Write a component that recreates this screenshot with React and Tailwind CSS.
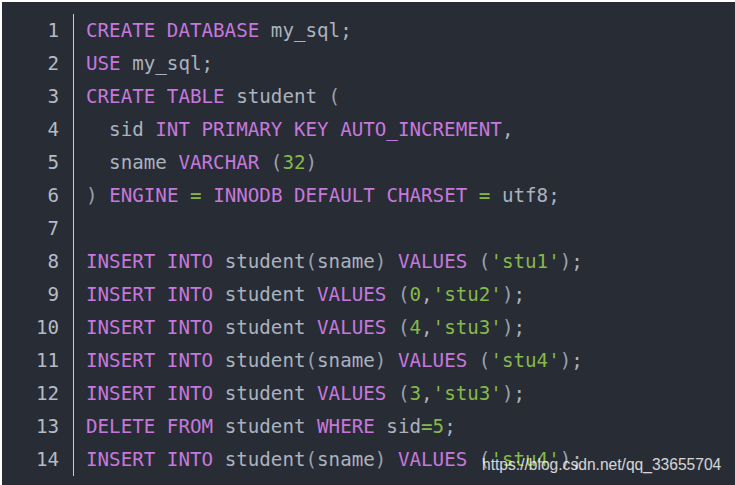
import React from "react";

const K = ({ children }) => <span className="text-[#c678dd]">{children}</span>;
const G = ({ children }) => <span className="text-[#86b94a]">{children}</span>;
const P = ({ children }) => <span className="text-[#9aa1ad]">{children}</span>;

const lines = [
  <><K>CREATE DATABASE</K> my_sql;</>,
  <><K>USE</K> my_sql;</>,
  <><K>CREATE TABLE</K> student <P>(</P></>,
  <>  sid <K>INT PRIMARY KEY AUTO_INCREMENT</K>,</>,
  <>  sname <K>VARCHAR</K> <P>(</P><G>32</G><P>)</P></>,
  <><P>)</P> <K>ENGINE</K> <G>=</G> <K>INNODB DEFAULT CHARSET</K> <G>=</G> utf8;</>,
  <>{" "}</>,
  <><K>INSERT INTO</K> student<P>(</P>sname<P>)</P> <K>VALUES</K> <P>(</P><G>'stu1'</G><P>)</P>;</>,
  <><K>INSERT INTO</K> student <K>VALUES</K> <P>(</P><G>0</G>,<G>'stu2'</G><P>)</P>;</>,
  <><K>INSERT INTO</K> student <K>VALUES</K> <P>(</P><G>4</G>,<G>'stu3'</G><P>)</P>;</>,
  <><K>INSERT INTO</K> student<P>(</P>sname<P>)</P> <K>VALUES</K> <P>(</P><G>'stu4'</G><P>)</P>;</>,
  <><K>INSERT INTO</K> student <K>VALUES</K> <P>(</P><G>3</G>,<G>'stu3'</G><P>)</P>;</>,
  <><K>DELETE FROM</K> student <K>WHERE</K> sid<G>=5</G>;</>,
  <><K>INSERT INTO</K> student<P>(</P>sname<P>)</P> <K>VALUES</K> <P>(</P><G>'stu4'</G><P>)</P>;</>,
];

export default function App() {
  return (
    <div className="w-[735px] h-[485px] bg-white pt-[2px] pl-[2px]">
      <div
        className="relative w-[733px] h-[483px] bg-[#282c34] text-[#abb2bf] text-[19.2px] leading-[33px] flex pt-[12px]"
        style={{ fontFamily: '"DejaVu Sans Mono", "Liberation Mono", monospace' }}
      >
        <div className="w-[57px] text-right text-[#b4bbc6] shrink-0">
          {lines.map((_, i) => (
            <div key={i}>{i + 1}</div>
          ))}
        </div>
        <div className="ml-[14px] border-l border-[#c8ccd2] pl-[12px] h-[462px] whitespace-pre">
          {lines.map((l, i) => (
            <div key={i}>{l}</div>
          ))}
        </div>
        <div
          className="absolute left-[480px] top-[453px] text-[15.6px] leading-[20px] text-white/80 whitespace-nowrap"
          style={{ fontFamily: '"Liberation Sans", Arial, sans-serif' }}
        >
          https://blog.csdn.net/qq_33655704
        </div>
      </div>
    </div>
  );
}
